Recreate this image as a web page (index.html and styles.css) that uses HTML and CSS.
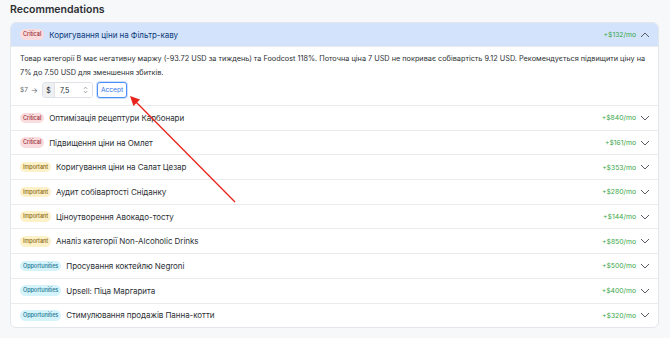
FILE: index.html
```html
<!DOCTYPE html>
<html>
<head>
<meta charset="utf-8">
<link rel="stylesheet" href="styles.css">
</head>
<body>
<div class="page">
  <h2 class="title">Recommendations</h2>
  <div class="card">
    <div class="item open">
      <div class="head">
        <span class="badge critical">Critical</span>
        <span class="name">Коригування ціни на Фільтр-каву</span>
        <span class="amount">+$132/mo</span>
        <svg class="chev" viewBox="0 0 10 6"><path d="M1 5 L5 1 L9 5"/></svg>
      </div>
      <div class="body">
        <p class="desc">Товар категорії B має негативну маржу (-93.72 USD за тиждень) та Foodcost 118%. Поточна ціна 7 USD не покриває собівартість 9.12 USD. Рекомендується підвищити ціну на 7% до 7.50 USD для зменшення збитків.</p>
        <div class="controls">
          <span class="old">$7</span>
          <span class="to">→</span>
          <div class="group">
            <span class="addon">$</span>
            <span class="input">7,5
              <svg class="spin" viewBox="0 0 6 10"><path d="M1 3.5 L3 1.5 L5 3.5 M1 6.5 L3 8.5 L5 6.5"/></svg>
            </span>
          </div>
          <button class="accept">Accept</button>
        </div>
      </div>
    </div>
    <div class="item"><div class="head"><span class="badge critical">Critical</span><span class="name">Оптимізація рецептури Карбонари</span><span class="amount">+$840/mo</span><svg class="chev" viewBox="0 0 10 6"><path d="M1 1 L5 5 L9 1"/></svg></div></div>
    <div class="item"><div class="head"><span class="badge critical">Critical</span><span class="name">Підвищення ціни на Омлет</span><span class="amount">+$161/mo</span><svg class="chev" viewBox="0 0 10 6"><path d="M1 1 L5 5 L9 1"/></svg></div></div>
    <div class="item"><div class="head"><span class="badge important">Important</span><span class="name">Коригування ціни на Салат Цезар</span><span class="amount">+$353/mo</span><svg class="chev" viewBox="0 0 10 6"><path d="M1 1 L5 5 L9 1"/></svg></div></div>
    <div class="item"><div class="head"><span class="badge important">Important</span><span class="name">Аудит собівартості Сніданку</span><span class="amount">+$280/mo</span><svg class="chev" viewBox="0 0 10 6"><path d="M1 1 L5 5 L9 1"/></svg></div></div>
    <div class="item"><div class="head"><span class="badge important">Important</span><span class="name">Ціноутворення Авокадо-тосту</span><span class="amount">+$144/mo</span><svg class="chev" viewBox="0 0 10 6"><path d="M1 1 L5 5 L9 1"/></svg></div></div>
    <div class="item"><div class="head"><span class="badge important">Important</span><span class="name">Аналіз категорії Non-Alcoholic Drinks</span><span class="amount">+$850/mo</span><svg class="chev" viewBox="0 0 10 6"><path d="M1 1 L5 5 L9 1"/></svg></div></div>
    <div class="item"><div class="head"><span class="badge opp">Opportunities</span><span class="name">Просування коктейлю Negroni</span><span class="amount">+$500/mo</span><svg class="chev" viewBox="0 0 10 6"><path d="M1 1 L5 5 L9 1"/></svg></div></div>
    <div class="item"><div class="head"><span class="badge opp">Opportunities</span><span class="name">Upsell: Піца Маргарита</span><span class="amount">+$400/mo</span><svg class="chev" viewBox="0 0 10 6"><path d="M1 1 L5 5 L9 1"/></svg></div></div>
    <div class="item"><div class="head"><span class="badge opp">Opportunities</span><span class="name">Стимулювання продажів Панна-котти</span><span class="amount">+$320/mo</span><svg class="chev" viewBox="0 0 10 6"><path d="M1 1 L5 5 L9 1"/></svg></div></div>
  </div>
  <svg class="annot" viewBox="0 0 670 338" width="670" height="338">
    <line x1="235" y1="202" x2="136" y2="102" />
    <polygon points="130,96 140,99.5 133.5,106" />
  </svg>
</div>
</body>
</html>
```
FILE: styles.css
```css
html, body {
  margin: 0;
  padding: 0;
}
body {
  background: #f7f8fa;
  font-family: Inter, "Noto Sans", "Liberation Sans", sans-serif;
  color: #212529;
  width: 670px;
  height: 338px;
  overflow: hidden;
}
.page {
  position: relative;
  padding: 2px 11px 0 10px;
}
.title {
  margin: 0 0 5px 0;
  font-size: 10.5px;
  line-height: 15px;
  font-weight: 600;
  color: #2b2f33;
}
.card {
  background: #fff;
  border: 1px solid #e3e6ea;
  border-radius: 6px;
  overflow: hidden;
}
.item + .item {
  border-top: 1px solid #e9ecef;
}
.head {
  display: flex;
  align-items: center;
  height: 23.7px;
  padding: 0 8px 0 9px;
  font-size: 8px;
  color: #2b2f33;
}
.open .head {
  background: #d3e3fc;
  color: #0b3a7a;
  height: 23px;
}
.badge {
  font-size: 5.5px;
  line-height: 10.5px;
  padding: 0 3px;
  border-radius: 6px;
  margin-right: 5px;
  font-weight: 500;
  letter-spacing: -0.05px;
}
.critical { background: #fadcdf; color: #9b2c35; }
.important { background: #fdf1ca; color: #8a6a10; }
.opp { background: #d5f3fb; color: #1b7892; }
.name {
  flex: 1;
  letter-spacing: -0.05px;
}
.amount {
  color: #3aa64a;
  font-size: 6.8px;
  margin-right: 4px;
}
.chev {
  width: 10px;
  height: 6px;
  fill: none;
  stroke: #555b61;
  stroke-width: 1;
}
.body {
  padding: 5px 10px 7px 9px;
  border-top: 1px solid #e9ecef;
}
.desc {
  margin: 0;
  font-size: 7.3px;
  line-height: 14px;
  color: #2b2f33;
}
.controls {
  display: flex;
  align-items: center;
  margin-top: 2px;
  font-size: 6.5px;
  color: #666b70;
}
.to { margin: 0 4px 0 3px; font-size: 7.5px; }
.group {
  display: flex;
  height: 16px;
  border: 1px solid #dee2e6;
  border-radius: 3px;
  overflow: hidden;
  box-sizing: border-box;
  width: 51px;
}
.addon {
  background: #eef0f2;
  border-right: 1px solid #dee2e6;
  width: 11px;
  display: flex;
  align-items: center;
  justify-content: center;
  color: #212529;
  font-size: 7px;
}
.input {
  flex: 1;
  display: flex;
  align-items: center;
  justify-content: space-between;
  padding: 0 4px 0 5px;
  color: #212529;
  font-size: 7px;
  background: #fff;
}
.spin {
  width: 5px;
  height: 8px;
  fill: none;
  stroke: #777;
  stroke-width: 0.9;
}
.accept {
  margin-left: 4px;
  height: 16px;
  padding: 0 3px;
  border: 1px solid #4d8ef7;
  border-radius: 3px;
  background: #fff;
  color: #2f74e6;
  font-family: inherit;
  font-size: 6.6px;
  box-shadow: 0 0 0 1px #cfe0fd;
}
.annot {
  position: absolute;
  left: 0;
  top: 0;
  pointer-events: none;
}
.annot line {
  stroke: #e8241c;
  stroke-width: 1.3;
}
.annot polygon {
  fill: #e8241c;
}
```
